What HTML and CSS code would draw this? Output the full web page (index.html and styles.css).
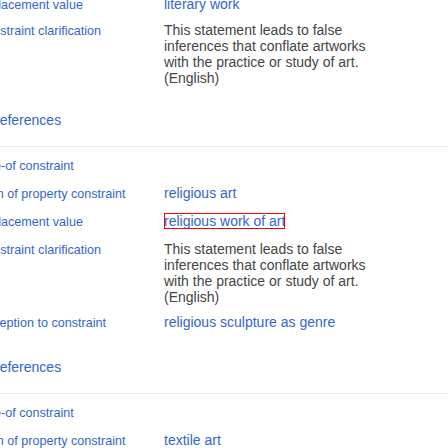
FILE: index.html
```html
<!DOCTYPE html>
<html>
<head>
<meta charset="utf-8">
<link rel="stylesheet" href="styles.css">
</head>
<body>
<div class="page">
  <div class="statement">
    <div class="qualifiers">
      <div class="q first">
        <a class="label">replacement value</a>
        <div class="value"><a class="link">literary work</a></div>
      </div>
      <div class="q">
        <a class="label">constraint clarification</a>
        <div class="value text">This statement leads to false inferences that conflate artworks with the practice or study of art. <span class="lang">(English)</span></div>
      </div>
    </div>
    <div class="refs"><a class="link">references</a></div>
  </div>

  <div class="statement">
    <div class="ctype"><a class="link">one-of constraint</a></div>
    <div class="qualifiers">
      <div class="q">
        <a class="label">item of property constraint</a>
        <div class="value"><a class="link">religious art</a></div>
      </div>
      <div class="q">
        <a class="label">replacement value</a>
        <div class="value"><a class="link highlight">religious work of art</a></div>
      </div>
      <div class="q">
        <a class="label">constraint clarification</a>
        <div class="value text">This statement leads to false inferences that conflate artworks with the practice or study of art. <span class="lang">(English)</span></div>
      </div>
      <div class="q">
        <a class="label">exception to constraint</a>
        <div class="value"><a class="link">religious sculpture as genre</a></div>
      </div>
    </div>
    <div class="refs"><a class="link">references</a></div>
  </div>

  <div class="statement">
    <div class="ctype"><a class="link">one-of constraint</a></div>
    <div class="qualifiers">
      <div class="q">
        <a class="label">item of property constraint</a>
        <div class="value"><a class="link">textile art</a></div>
      </div>
    </div>
  </div>
</div>
</body>
</html>
```

FILE: styles.css
```css
html, body {
  margin: 0;
  padding: 0;
  background: #ffffff;
  overflow: hidden;
}

body {
  font-family: "Liberation Sans", Arial, sans-serif;
  color: #444444;
}

.page {
  margin: -9px 0 0 -20px;
  width: 468px;
}

.statement {
  border-bottom: 1px solid #eaecf0;
}

.link, .label {
  color: #3366cc;
  text-decoration: none;
}

.ctype {
  padding-top: 9px;
  margin-bottom: 4px;
  font-size: 12.6px;
  line-height: 20px;
}

.q {
  display: flex;
  align-items: baseline;
  padding: 4px 0;
}

.q.first {
  padding-bottom: 2px;
}

.label {
  flex: none;
  width: 184px;
  font-size: 12.6px;
  line-height: 20px;
}

.value {
  width: 215px;
  font-size: 14px;
  line-height: 16px;
}

.text {
  color: #444444;
}

.highlight {
  outline: 1px solid #ff0000;
  outline-offset: -1px;
}

.refs {
  padding: 20px 0 16px 15px;
  font-size: 14px;
  line-height: 20px;
}
```
